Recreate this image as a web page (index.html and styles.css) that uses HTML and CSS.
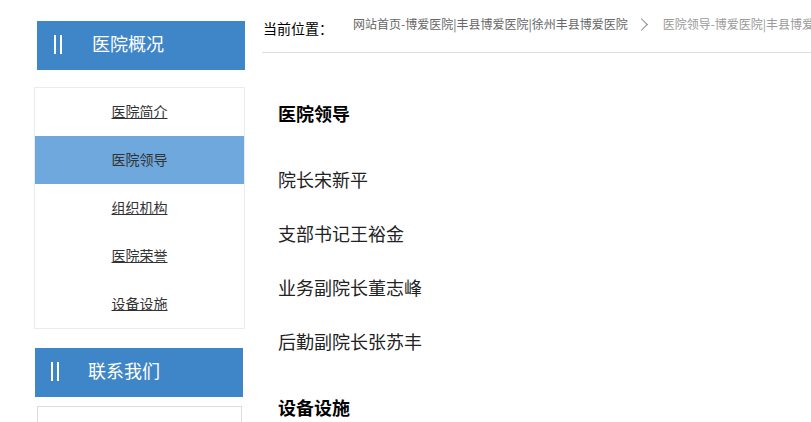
FILE: index.html
```html
<!DOCTYPE html>
<html lang="zh-CN">
<head>
    <meta charset="UTF-8">
    <meta name="viewport" content="width=device-width, initial-scale=1.0">
    <title>医院领导</title>
    <link rel="stylesheet" href="styles.css">
</head>
<body>
    <div class="page">
        <!-- left column -->
        <div class="sidebar">
            <div class="side-title first">
                <span class="bars"></span>
                <span class="side-title-text">医院概况</span>
            </div>
            <ul class="side-menu">
                <li><a href="#">医院简介</a></li>
                <li class="active"><a href="#">医院领导</a></li>
                <li><a href="#">组织机构</a></li>
                <li><a href="#">医院荣誉</a></li>
                <li><a href="#">设备设施</a></li>
            </ul>

            <div class="side-title second">
                <span class="bars"></span>
                <span class="side-title-text">联系我们</span>
            </div>
            <div class="contact-box"></div>
        </div>

        <!-- main column -->
        <div class="main">
            <div class="crumbs">
                <span class="crumb-label">当前位置：</span>
                <a class="crumb-link" href="#">网站首页-博爱医院|丰县博爱医院|徐州丰县博爱医院</a>
                <span class="crumb-sep"></span>
                <span class="crumb-current">医院领导-博爱医院|丰县博爱医院|徐州丰县博爱医院</span>
            </div>

            <div class="article">
                <h3>医院领导</h3>
                <p>院长宋新平</p>
                <p>支部书记王裕金</p>
                <p>业务副院长董志峰</p>
                <p>后勤副院长张苏丰</p>
                <h3 class="next">设备设施</h3>
            </div>
        </div>
    </div>
</body>
</html>
```

FILE: styles.css
```css
body {
    margin: 0;
    padding: 0;
    background: #fff;
    font-family: "Noto Sans CJK SC", "Noto Sans", sans-serif;
    color: #333;
    overflow: hidden;
}

.page {
    display: flex;
    align-items: flex-start;
    height: 422px;
    overflow: hidden;
}

/* sidebar */
.sidebar {
    width: 211px;
    margin-left: 34px;
    flex-shrink: 0;
}

.side-title {
    display: flex;
    align-items: center;
    height: 49px;
    width: 208px;
    background: #3f86c8;
    color: #fff;
    box-sizing: border-box;
}

.side-title.first {
    margin-top: 21px;
    margin-left: 3px;
    padding-left: 17px;
}

.side-title.second {
    margin-top: 19px;
    margin-left: 1px;
    padding-left: 16px;
}

.bars {
    display: block;
    flex-shrink: 0;
    width: 4px;
    height: 19px;
    margin-top: -3px;
    border-left: 2px solid #fff;
    border-right: 2px solid #fff;
}

.side-title-text {
    font-size: 18px;
    line-height: 24px;
    margin-top: -5px;
}

.first .side-title-text {
    margin-left: 30px;
}

.second .side-title-text {
    margin-left: 29px;
}

.side-menu {
    list-style: none;
    margin: 17px 0 0 0;
    padding: 0;
    border: 1px solid #ebebeb;
}

.side-menu li {
    height: 48px;
    line-height: 46px;
    text-align: center;
    font-size: 14px;
}

.side-menu a {
    color: #333;
    text-decoration: underline;
}

.side-menu li.active {
    background: #6ea8dc;
}

.side-menu li.active a {
    text-decoration: none;
}

.contact-box {
    margin: 9px 0 0 3px;
    width: 205px;
    height: 40px;
    border: 1px solid #dcdcdc;
    box-sizing: border-box;
}

/* main */
.main {
    flex: 1;
    margin-left: 17px;
    min-width: 0;
}

.crumbs {
    display: flex;
    align-items: center;
    height: 52px;
    border-bottom: 1px solid #dddddd;
    white-space: nowrap;
    overflow: hidden;
    padding-left: 1px;
}

.crumbs > * {
    flex-shrink: 0;
}

.crumb-label {
    font-size: 14px;
    color: #000;
    margin-top: 3px;
    width: 90px;
}

.crumb-link {
    font-size: 12px;
    color: #666;
    text-decoration: none;
    margin-top: -5px;
}

.crumb-sep {
    display: block;
    width: 8px;
    height: 8px;
    border-top: 1px solid #888;
    border-right: 1px solid #888;
    transform: rotate(45deg);
    margin: -4px 17px 0 9px;
}

.crumb-current {
    font-size: 12px;
    color: #9a9a9a;
    margin-top: -5px;
}

.article {
    padding-left: 16px;
}

.article h3 {
    margin: 45px 0 24px 0;
    font-size: 18px;
    line-height: 30px;
    font-weight: bold;
    color: #000;
}

.article h3.next {
    margin-top: 24px;
}

.article p {
    margin: 0;
    font-size: 18px;
    line-height: 54px;
    color: #222;
}
```
